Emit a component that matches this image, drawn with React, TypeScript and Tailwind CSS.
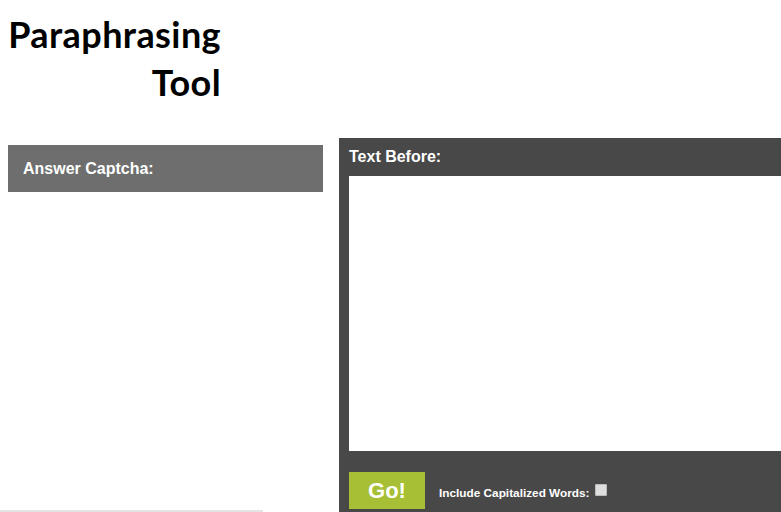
import React from "react";

export default function App() {
  return (
    <div className="w-[781px] h-[512px] overflow-hidden bg-white relative" style={{ fontFamily: '"Liberation Sans", Arial, sans-serif' }}>
      <div className="w-[221px] pt-[10px] text-right text-black font-bold text-[36px] leading-[48px] tracking-[0.4px]" style={{ fontFamily: 'Lato, "Open Sans", sans-serif' }}>
        <div>Paraphrasing</div>
        <div>Tool</div>
      </div>
      <div className="flex mt-[32px]">
        <div className="shrink-0 ml-[8px] w-[315px] mt-[7px]">
          <div className="h-[47px] bg-[#6e6e6e] text-white font-bold text-[16px] pl-[15px] pt-[12px]">Answer Captcha:</div>
        </div>
        <div className="shrink-0 ml-[16px] w-[460px] h-[374px] bg-[#484848] pl-[10px] flex flex-col">
          <div className="h-[38px] text-white font-bold text-[16px] pt-[7px]">Text Before:</div>
          <textarea className="shrink-0 h-[275px] w-full bg-white border-0 outline-none resize-none" />
          <div className="flex items-center mt-[21px]">
            <button className="w-[76px] h-[37px] bg-[#a6bf35] text-white font-bold text-[22px]">Go!</button>
            <span className="ml-[14px] mt-[6px] text-white font-bold text-[11.8px]">Include Capitalized Words:</span>
            <span className="ml-[5px] mt-[-2px] w-[12px] h-[12px] bg-[#dedede] border border-[#bdbdbd] rounded-[1px]" />
          </div>
        </div>
      </div>
      <div className="absolute left-0 bottom-0 w-[263px] h-[2px] bg-[#e3e3e3]" />
    </div>
  );
}
